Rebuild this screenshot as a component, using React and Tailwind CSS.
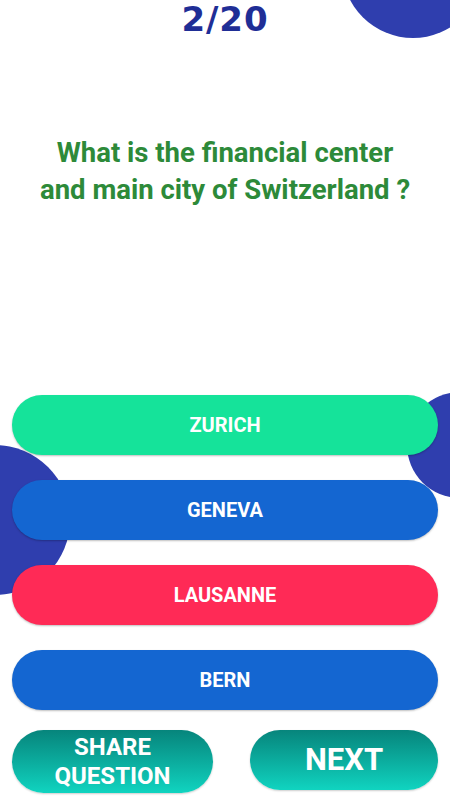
import React from "react";

const answers = [
  { label: "ZURICH", color: "bg-[#15e39a]" },
  { label: "GENEVA", color: "bg-[#1466d1]" },
  { label: "LAUSANNE", color: "bg-[#ff2a56]" },
  { label: "BERN", color: "bg-[#1466d1]" },
];

function AnswerButton({ label, color }) {
  return (
    <button
      className={`${color} h-[60px] w-full rounded-full text-white text-[20px] font-bold shadow-[0_1px_2px_rgba(0,0,0,0.25)]`}
    >
      {label}
    </button>
  );
}

export default function App() {
  return (
    <div
      className="relative h-[800px] w-[450px] overflow-hidden bg-white"
      style={{ fontFamily: "Roboto, 'Liberation Sans', sans-serif" }}
    >
      {/* decorative circles */}
      <div className="absolute left-[342px] top-[-104px] h-[142px] w-[142px] rounded-full bg-[#2f3eae]" />
      <div className="absolute left-[407px] top-[392px] h-[106px] w-[106px] rounded-full bg-[#2f3eae]" />
      <div className="absolute left-[-80px] top-[445px] h-[150px] w-[150px] rounded-full bg-[#2f3eae]" />

      <div className="relative flex flex-col">
        {/* Counter */}
        <h1
          className="text-center text-[34px] leading-[38px] font-bold text-[#1f2e96] tracking-wide"
          style={{ fontFamily: "'DejaVu Sans', sans-serif" }}
        >
          2/20
        </h1>

        {/* Question */}
        <p className="mt-[96px] px-4 text-center text-[27.5px] leading-[37px] font-bold text-[#2d8a39]">
          What is the financial center
          <br />
          and main city of Switzerland ?
        </p>

        {/* Answers */}
        <div className="mt-[187px] flex flex-col gap-[25px] px-[12px]">
          {answers.map((a) => (
            <AnswerButton key={a.label} {...a} />
          ))}
        </div>

        {/* Bottom actions */}
        <div className="mt-[20px] flex items-start justify-between px-[12px]">
          <button className="h-[63px] w-[201px] rounded-full bg-gradient-to-b from-[#07857c] to-[#10d4c0] text-white text-[24px] leading-[29px] font-bold shadow-[0_1px_2px_rgba(0,0,0,0.2)]">
            SHARE
            <br />
            QUESTION
          </button>
          <button className="h-[60px] w-[188px] rounded-full bg-gradient-to-b from-[#07857c] to-[#10d4c0] text-white text-[31px] font-bold shadow-[0_1px_2px_rgba(0,0,0,0.2)]">
            NEXT
          </button>
        </div>
      </div>
    </div>
  );
}
